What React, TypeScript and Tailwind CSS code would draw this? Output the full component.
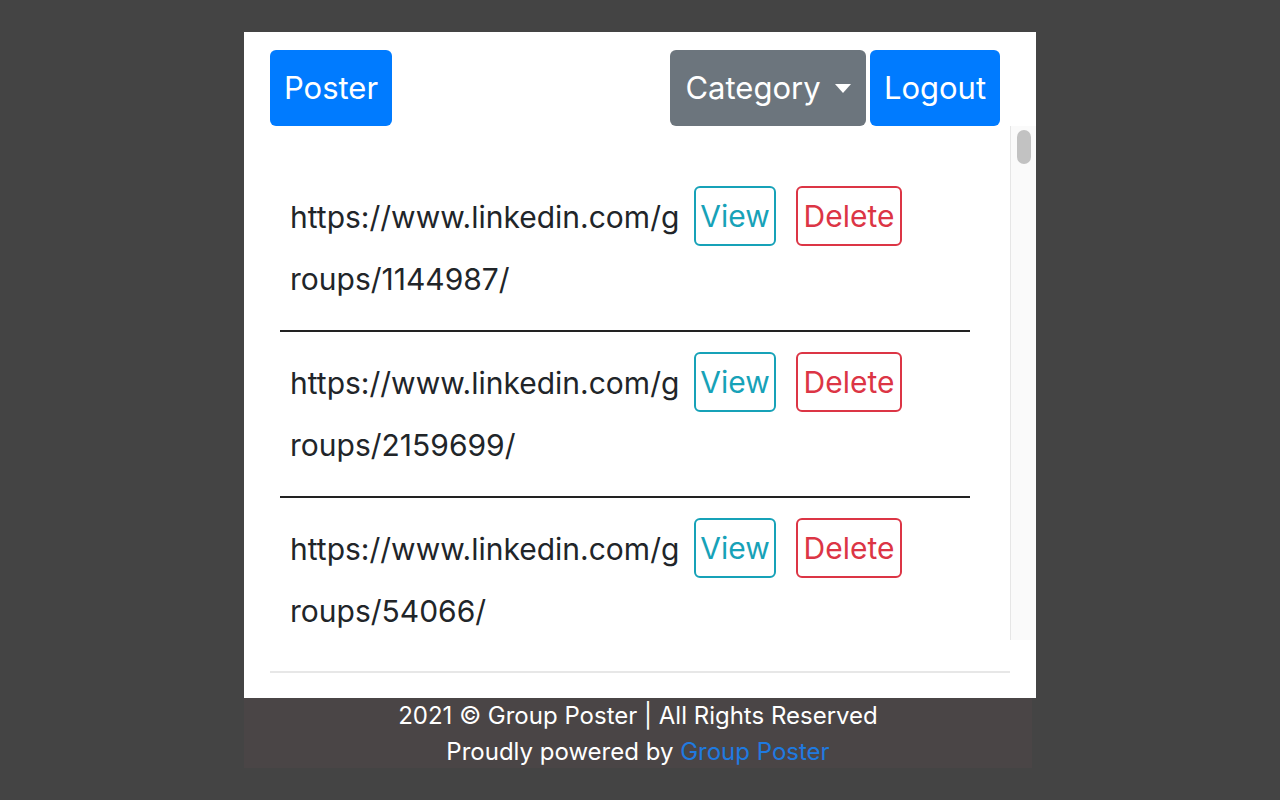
import React from 'react';

const links = [
  'https://www.linkedin.com/groups/1144987/',
  'https://www.linkedin.com/groups/2159699/',
  'https://www.linkedin.com/groups/54066/',
];

const font = { fontFamily: 'Inter, "Noto Sans", sans-serif' };

const LinkRow: React.FC<{ url: string }> = ({ url }) => (
  <div className="flex items-start pl-[10px]">
    <div className="w-[394px] break-all text-[30px] leading-[62px] text-[#212529]">{url}</div>
    <button className="ml-[10px] h-[60px] w-[82px] rounded-[6px] border-2 border-[#17a2b8] text-[30px] text-[#17a2b8]">
      View
    </button>
    <button className="ml-[20px] h-[60px] w-[106px] rounded-[6px] border-2 border-[#dc3545] text-[30px] text-[#dc3545]">
      Delete
    </button>
  </div>
);

export default function App() {
  return (
    <div className="min-h-screen w-full bg-[#444444] pt-[32px] flex flex-col items-center" style={font}>
      <div className="w-[792px] h-[666px] bg-white flex flex-col">
        {/* nav */}
        <div className="flex items-center justify-between pl-[26px] pr-[36px] pt-[18px]">
          <button className="h-[76px] w-[122px] rounded-[6px] bg-[#007bff] text-white text-[31px]">Poster</button>
          <div className="flex gap-[4px]">
            <button className="h-[76px] w-[196px] rounded-[6px] bg-[#6c757d] text-white text-[31px] flex items-center justify-center gap-[14px]">
              Category
              <span className="w-0 h-0 border-l-[8px] border-r-[8px] border-t-[9px] border-l-transparent border-r-transparent border-t-white"></span>
            </button>
            <button className="h-[76px] w-[130px] rounded-[6px] bg-[#007bff] text-white text-[31px]">Logout</button>
          </div>
        </div>

        {/* list */}
        <div className="ml-[26px] h-[514px] flex">
          <div className="flex-1 overflow-hidden pt-[60px] px-[10px]">
            {links.map((url, i) => (
              <div key={url}>
                <LinkRow url={url} />
                {i < links.length - 1 && <div className="my-[20px] h-[2px] w-[690px] bg-[#222]"></div>}
              </div>
            ))}
          </div>
          <div className="w-[26px] border-l border-[#e6e6e6] bg-[#fafafa] pt-[4px] flex justify-center">
            <div className="w-[14px] h-[34px] rounded-full bg-[#c2c2c2]"></div>
          </div>
        </div>

        <div className="ml-[26px] mt-[31px] h-[2px] w-[740px] bg-[#e7e7e7]"></div>
      </div>

      {/* footer */}
      <div className="w-[788px] h-[70px] bg-[#4a4546] text-white text-[24px] leading-[36px] text-center mr-[4px]">
        <div>2021 © Group Poster | All Rights Reserved</div>
        <div>
          Proudly powered by <a className="text-[#1f7ae0]">Group Poster</a>
        </div>
      </div>
    </div>
  );
}
